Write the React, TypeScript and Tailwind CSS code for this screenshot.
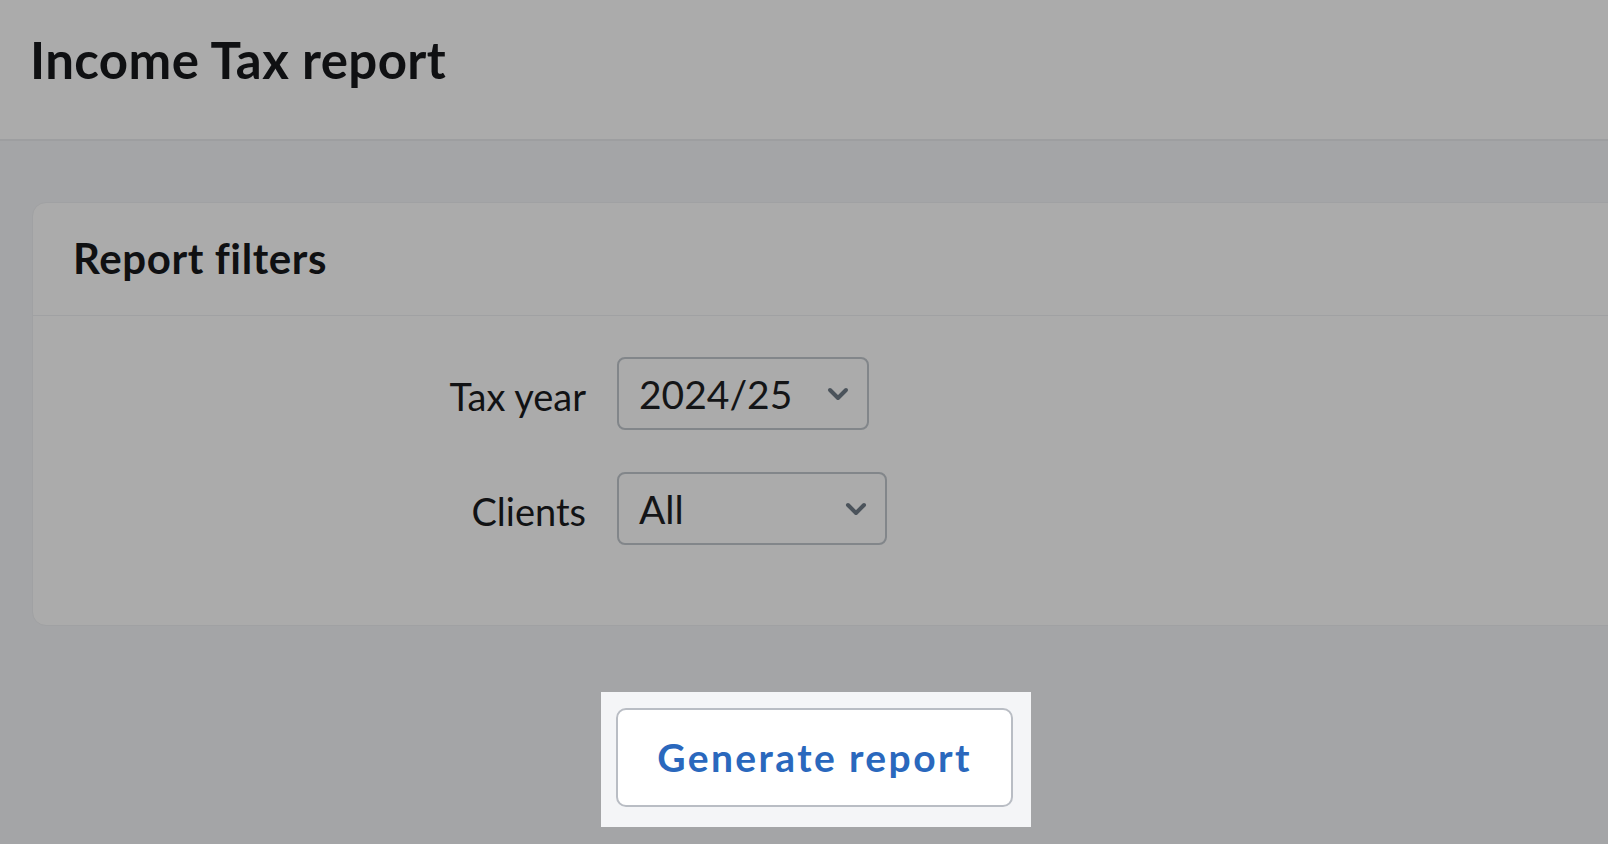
const Chevron = () => (
  <svg width="22" height="14" viewBox="0 0 22 14" fill="none" className="shrink-0">
    <path d="M3 3 L11 11 L19 3" stroke="#4b535b" strokeWidth="4" strokeLinecap="round" strokeLinejoin="round" />
  </svg>
);

const filters = [
  { label: 'Tax year', value: '2024/25', width: 'w-[252px]' },
  { label: 'Clients', value: 'All', width: 'w-[270px]' },
];

const App = () => {
  return (
    <div className="min-h-screen w-full overflow-hidden bg-[#a4a5a7] font-['Lato',sans-serif] text-[#0f1012]">
      {/* Page header */}
      <header className="box-border h-[141px] border-b-2 border-[#9d9ea0] bg-[#ababab] pl-[30px] pt-[30px]">
        <h1 className="text-[51px] font-bold leading-[60px] tracking-[0.4px]">Income Tax report</h1>
      </header>

      <main className="pt-[61px]">
        {/* Filters card */}
        <section className="ml-[32px] mr-[-60px] rounded-[14px] border border-[#a0a1a3] bg-[#ababab]">
          <div className="box-border h-[113px] border-b border-[#a0a1a3] pl-[40px] pt-[30px]">
            <h2 className="text-[42px] font-bold leading-[50px] tracking-[0.6px]">Report filters</h2>
          </div>
          <div className="flex flex-col gap-[42px] pb-[80px] pt-[41px]">
            {filters.map((f) => (
              <div key={f.label} className="flex items-center gap-[31px]">
                <label className="w-[553px] pt-[5px] text-right text-[38px] leading-[46px] text-[#111214]">
                  {f.label}
                </label>
                <div
                  className={`${f.width} box-border flex h-[73px] items-center justify-between rounded-[8px] border-2 border-[#82868a] pl-[20px] pr-[18px]`}
                >
                  <span className="text-[39px] leading-[46px] text-[#141517]">{f.value}</span>
                  <Chevron />
                </div>
              </div>
            ))}
          </div>
        </section>

        {/* Highlighted action */}
        <div className="ml-[601px] mt-[66px] w-fit bg-[#f4f5f7] pb-[20px] pl-[15px] pr-[18px] pt-[16px]">
          <button className="box-border flex h-[99px] w-[397px] items-center justify-center rounded-[10px] border-2 border-[#b9bdc4] bg-white text-[39px] font-bold tracking-[2.4px] text-[#2a68bd]">
            Generate report
          </button>
        </div>
      </main>
    </div>
  );
};

export default App;
